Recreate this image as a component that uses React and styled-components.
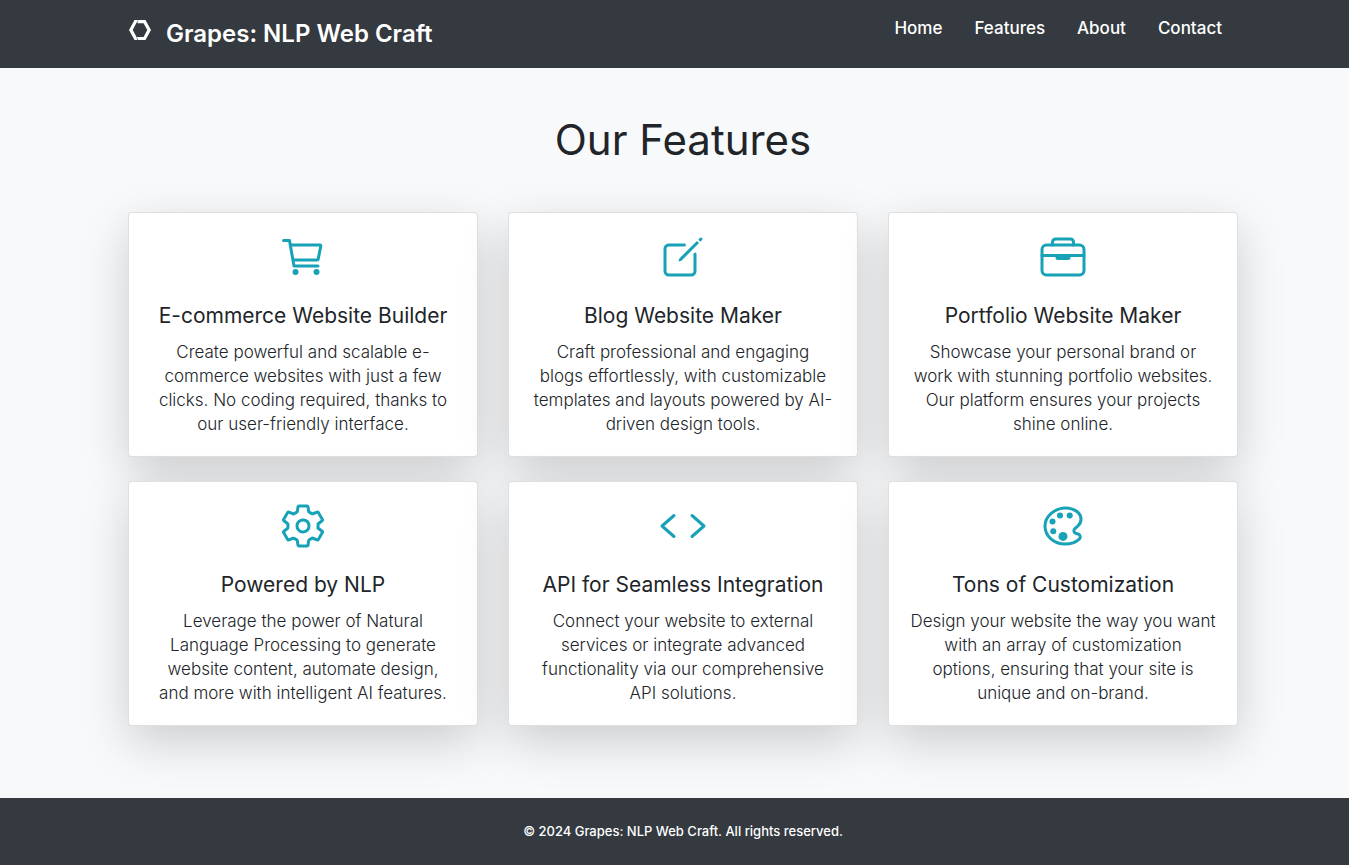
import React from 'react';
import styled, { createGlobalStyle } from 'styled-components';
import {
  IoCartOutline,
  IoCreateOutline,
  IoBriefcaseOutline,
  IoSettingsOutline,
  IoCodeOutline,
  IoColorPaletteOutline,
} from 'react-icons/io5';

const GlobalStyle = createGlobalStyle`
  *, *::before, *::after { box-sizing: border-box; }
  body {
    margin: 0;
    background: #f8f9fa;
    color: #212529;
    font-family: Inter, "Liberation Sans", sans-serif;
    font-size: 17px;
    font-weight: 300;
    line-height: 24px;
  }
`;

const Band = styled.div`
  padding: 0 15px 0 32px;
`;

const Container = styled.div`
  max-width: 1110px;
  margin: 0 auto;
`;

const Header = styled(Band).attrs({ as: 'header' })`
  background: #343a40;
  color: #fff;
`;

const HeaderInner = styled(Container)`
  display: flex;
  justify-content: space-between;
  align-items: flex-start;
  min-height: 68px;
`;

const Brand = styled.a`
  display: flex;
  align-items: flex-start;
  gap: 14px;
  padding-top: 18px;
  color: #fff;
  text-decoration: none;
  font-size: 24px;
  font-weight: 600;
  line-height: 32px;

  svg {
    width: 24px;
    height: 24px;
  }
`;

const NavList = styled.ul`
  display: flex;
  gap: 32px;
  margin: 0;
  padding: 16px 16px 0 0;
  list-style: none;
`;

const NavLink = styled.a`
  color: #fff;
  font-weight: 500;
  text-decoration: none;
`;

const Features = styled(Band).attrs({ as: 'main' })`
  padding-top: 48px;
  padding-bottom: 72px;
`;

const Heading = styled.h2`
  margin: 0 0 48px;
  font-size: 42px;
  font-weight: 400;
  line-height: 48px;
  text-align: center;
`;

const Grid = styled.div`
  display: grid;
  grid-template-columns: repeat(3, 1fr);
  gap: 24px 30px;

  @media (max-width: 900px) {
    grid-template-columns: 1fr;
  }
`;

const Card = styled.article`
  padding: 20px;
  border: 1px solid rgba(0, 0, 0, 0.125);
  border-radius: 4px;
  background: #fff;
  box-shadow: 0 16px 48px rgba(0, 0, 0, 0.175);
  text-align: center;

  svg {
    display: block;
    width: 48px;
    height: 48px;
    margin: 0 auto 23px;
    color: #17a2b8;
  }
`;

const CardTitle = styled.h3`
  margin: 0 0 12px;
  font-size: 21px;
  font-weight: 400;
  line-height: 24px;
`;

const CardText = styled.p`
  margin: 0;
`;

const Line = styled.span`
  display: block;
  white-space: nowrap;
`;

const Footer = styled(Band).attrs({ as: 'footer' })`
  padding-top: 24px;
  padding-bottom: 24px;
  background: #343a40;
  color: #fff;
  font-size: 13px;
  font-weight: 500;
  line-height: 19px;
  text-align: center;
`;

const features = [
  {
    Icon: IoCartOutline,
    title: 'E-commerce Website Builder',
    lines: ['Create powerful and scalable e-', 'commerce websites with just a few', 'clicks. No coding required, thanks to', 'our user-friendly interface.'],
  },
  {
    Icon: IoCreateOutline,
    title: 'Blog Website Maker',
    lines: ['Craft professional and engaging', 'blogs effortlessly, with customizable', 'templates and layouts powered by AI-', 'driven design tools.'],
  },
  {
    Icon: IoBriefcaseOutline,
    title: 'Portfolio Website Maker',
    lines: ['Showcase your personal brand or', 'work with stunning portfolio websites.', 'Our platform ensures your projects', 'shine online.'],
  },
  {
    Icon: IoSettingsOutline,
    title: 'Powered by NLP',
    lines: ['Leverage the power of Natural', 'Language Processing to generate', 'website content, automate design,', 'and more with intelligent AI features.'],
  },
  {
    Icon: IoCodeOutline,
    title: 'API for Seamless Integration',
    lines: ['Connect your website to external', 'services or integrate advanced', 'functionality via our comprehensive', 'API solutions.'],
  },
  {
    Icon: IoColorPaletteOutline,
    title: 'Tons of Customization',
    lines: ['Design your website the way you want', 'with an array of customization', 'options, ensuring that your site is', 'unique and on-brand.'],
  },
];

const LogoMark = () => (
  <svg viewBox="0 0 24 24" fill="#fff" aria-hidden="true">
    <path d="M6.500 2H10L9.200 4.600H8.600L4.700 12 8.300 18.600 9.300 22H6.500L1 12Z" />
    <path d="M10.400 2H17.500L23 12 17.500 22H9.900L8.900 18.900H15.600L19.300 12 15.600 5.200H9.500Z" />
  </svg>
);

export default function App() {
  return (
    <>
      <GlobalStyle />
      <Header>
        <HeaderInner>
          <Brand href="#home">
            <LogoMark />
            Grapes: NLP Web Craft
          </Brand>
          <nav>
            <NavList>
              {['Home', 'Features', 'About', 'Contact'].map((name) => (
                <li key={name}>
                  <NavLink href={`#${name.toLowerCase()}`}>{name}</NavLink>
                </li>
              ))}
            </NavList>
          </nav>
        </HeaderInner>
      </Header>
      <Features>
        <Container>
          <Heading>Our Features</Heading>
          <Grid>
            {features.map(({ Icon, title, lines }) => (
              <Card key={title}>
                <Icon aria-hidden="true" />
                <CardTitle>{title}</CardTitle>
                <CardText>
                  {lines.map((line) => (
                    <Line key={line}>{line} </Line>
                  ))}
                </CardText>
              </Card>
            ))}
          </Grid>
        </Container>
      </Features>
      <Footer>© 2024 Grapes: NLP Web Craft. All rights reserved.</Footer>
    </>
  );
}
